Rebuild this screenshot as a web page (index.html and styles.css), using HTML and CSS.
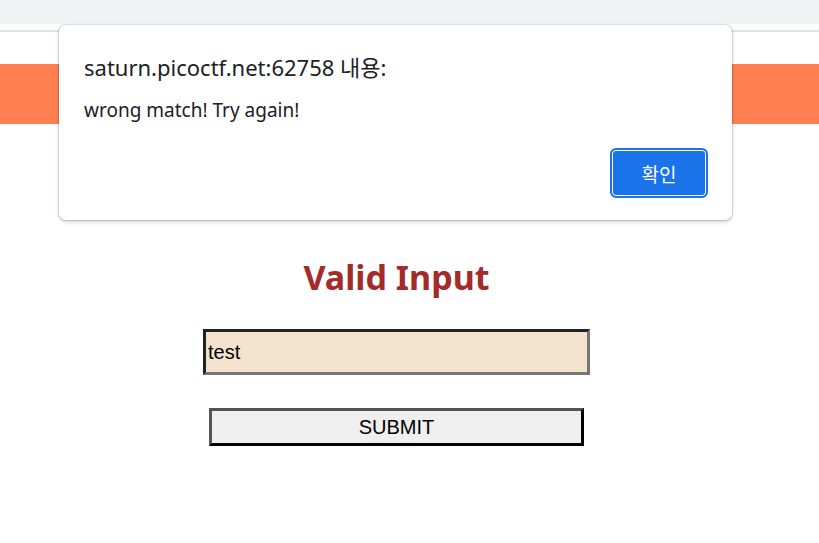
FILE: index.html
```html
<!DOCTYPE html>
<html lang="ko">
<head>
<meta charset="utf-8">
<title>Valid Input</title>
<link rel="stylesheet" href="styles.css">
</head>
<body>
<div class="chrome"></div>
<div class="page">
  <div class="banner"></div>
  <main class="content">
    <h1 class="title">Valid Input</h1>
    <form class="form">
      <input class="field" type="text" value="test">
      <button class="submit" type="button">SUBMIT</button>
    </form>
  </main>
</div>
<div class="dialog">
  <div class="dialog-title">saturn.picoctf.net:62758 내용:</div>
  <div class="dialog-msg">wrong match! Try again!</div>
  <div class="dialog-actions">
    <button class="ok" type="button">확인</button>
  </div>
</div>
</body>
</html>
```
FILE: styles.css
```css
html, body {
  margin: 0;
  padding: 0;
  background: #ffffff;
}
body {
  width: 819px;
  height: 543px;
  overflow: hidden;
  position: relative;
  font-family: "Noto Sans", "Noto Sans CJK KR", sans-serif;
}
.chrome {
  height: 24px;
  background: #f1f2f4;
}
.page {
  margin-top: 6px;
  border-top: 2px solid #e2e3e5;
}
.banner {
  margin-top: 32px;
  height: 60px;
  background: #ff7f50;
}
.content {
  width: 793px;
  display: flex;
  flex-direction: column;
  align-items: center;
}
.title {
  margin: 130px 0 0 0;
  color: #a52a2a;
  font-size: 34px;
  font-weight: 700;
  line-height: 46px;
}
.form {
  display: flex;
  flex-direction: column;
  align-items: center;
  margin-top: 29px;
}
.field {
  box-sizing: border-box;
  width: 387px;
  height: 46px;
  margin: 0;
  padding: 0 2px;
  background: #f2e2ce;
  border-style: solid;
  border-width: 3px;
  border-color: #222222 #767676 #767676 #222222;
  font-family: "Liberation Sans", Arial, sans-serif;
  font-size: 20px;
  color: #000;
  outline: none;
}
.submit {
  box-sizing: border-box;
  width: 375px;
  height: 38px;
  margin: 33px 0 0 0;
  padding: 0;
  background: #efefef;
  border-style: solid;
  border-width: 3px;
  border-color: #555555 #000000 #000000 #555555;
  font-family: "Liberation Sans", Arial, sans-serif;
  font-size: 20px;
  color: #000;
}
.dialog {
  position: absolute;
  left: 59px;
  top: 25px;
  width: 673px;
  height: 195px;
  box-sizing: border-box;
  background: #ffffff;
  border-radius: 7px;
  box-shadow: 0 0 0 1px rgba(0,0,0,0.12), 0 2px 4px rgba(0,0,0,0.18);
  padding: 27px 24px 0 25px;
  display: flex;
  flex-direction: column;
}
.dialog-title {
  font-size: 22px;
  line-height: 30px;
  color: #202124;
}
.dialog-msg {
  margin-top: 15px;
  font-size: 19px;
  line-height: 26px;
  color: #202124;
}
.dialog-actions {
  display: flex;
  justify-content: flex-end;
  margin-top: 25px;
}
.ok {
  box-sizing: border-box;
  width: 98px;
  height: 50px;
  border-radius: 6px;
  background: #1a73e8;
  border: 2px solid #1a73e8;
  box-shadow: inset 0 0 0 1px #ffffff, inset 0 0 0 2px #1a73e8;
  color: #ffffff;
  font-family: "Noto Sans CJK KR", "Noto Sans", sans-serif;
  font-size: 19px;
  padding: 0;
}
```
